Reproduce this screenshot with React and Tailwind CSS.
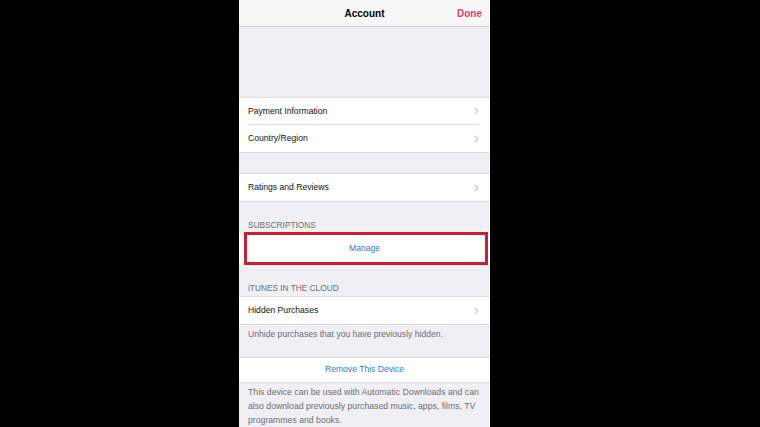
import React from 'react';

const font = { fontFamily: '"Liberation Sans", Arial, sans-serif' };

function Chevron() {
  return (
    <svg width="5" height="8" viewBox="0 0 5 8" className="shrink-0">
      <path d="M1 1l3 3-3 3" fill="none" stroke="#c7c7cc" strokeWidth="1.1" />
    </svg>
  );
}

function Row({ label, divider }) {
  return (
    <div className="h-[27px] bg-white flex items-center pl-[9px] pr-[11px]">
      <div className={`flex-1 h-full flex items-center justify-between ${divider ? 'border-b border-[#dcdce0]' : ''}`}>
        <span className="text-[8.6px] text-[#111]">{label}</span>
        <Chevron />
      </div>
    </div>
  );
}

function Header({ children, className = '' }) {
  return (
    <div className={`flex items-end pl-[9px] text-[8.3px] text-[#6d6d72] ${className}`}>
      {children}
    </div>
  );
}

export default function App() {
  return (
    <div className="w-[760px] h-[427px] bg-black overflow-hidden flex pl-[239px]" style={font}>
      <div className="w-[251px] h-full bg-[#efeff4] flex flex-col">
        {/* nav bar */}
        <div className="h-[27px] shrink-0 bg-[#f7f7f8] border-b border-[#d0d0d4] relative flex items-center justify-center">
          <span className="text-[10px] font-bold text-black">Account</span>
          <span className="absolute right-[8px] top-0 h-full flex items-center text-[10px] font-bold text-[#df3d63]">Done</span>
        </div>

        <div className="h-[70px] shrink-0" />

        <div className="border-y border-[#dcdce0]">
          <Row label="Payment Information" divider />
          <Row label="Country/Region" />
        </div>

        <div className="h-[20px] shrink-0" />

        <div className="border-y border-[#dcdce0]">
          <Row label="Ratings and Reviews" />
        </div>

        <Header className="h-[30px] pb-0">SUBSCRIPTIONS</Header>

        <div className="h-[29px] bg-white relative flex items-center justify-center mt-[3px]">
          <span className="text-[8.6px] text-[#2f7dc3]">Manage</span>
          <div className="absolute left-[5px] right-[2px] top-[-2px] bottom-[-2px] border-[3px] border-[#c9202f]" />
        </div>

        <Header className="h-[34px] pb-[2px]">iTUNES IN THE CLOUD</Header>

        <div className="border-y border-[#dcdce0]">
          <Row label="Hidden Purchases" />
        </div>

        <div className="h-[32px] pl-[9px] pt-[3px] text-[8.6px] text-[#6d6d72]">
          Unhide purchases that you have previously hidden.
        </div>

        <div className="h-[27px] bg-white border-y border-[#dcdce0] flex items-center justify-center">
          <span className="text-[8.6px] text-[#2f7dc3]">Remove This Device</span>
        </div>

        <div className="pl-[9px] pt-[2px] text-[8.7px] leading-[14px] text-[#6d6d72] whitespace-nowrap">
          This device can be used with Automatic Downloads and can
          <br />
          also download previously purchased music, apps, films, TV
          <br />
          programmes and books.
        </div>
      </div>
    </div>
  );
}
